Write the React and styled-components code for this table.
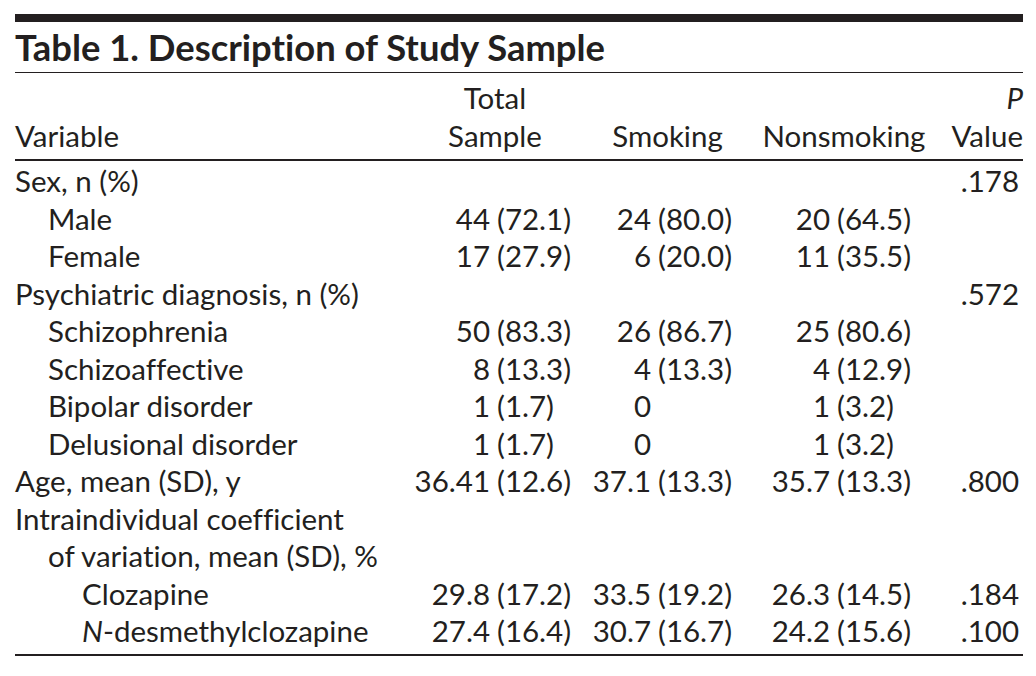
import React from "react";
import styled, { createGlobalStyle } from "styled-components";

const GlobalStyle = createGlobalStyle`
  html, body {
    margin: 0;
    padding: 0;
    background: #ffffff;
  }
  body {
    font-family: Lato, "Open Sans", "Liberation Sans", sans-serif;
    font-variant-ligatures: none;
    font-feature-settings: "liga" 0, "clig" 0;
    color: #231f20;
  }
`;

const Page = styled.div`
  width: 1008px;
  padding: 14px 0 0 15px;
`;

const TopRule = styled.div`
  height: 8px;
  background: #231f20;
`;

const Title = styled.h1`
  margin: 0;
  font-size: 36.4px;
  font-weight: 700;
  line-height: 50px;
  border-bottom: 1px solid #231f20;
`;

const Table = styled.table`
  width: 100%;
  border-collapse: collapse;
  table-layout: fixed;
  font-size: 29.5px;
  border-bottom: 2px solid #231f20;
`;

const Head = styled.thead`
  border-bottom: 2px solid #231f20;
`;

const HeadCell = styled.th`
  font-weight: 400;
  padding: 6px 0 4px;
  line-height: 38px;
  vertical-align: bottom;
  text-align: ${(p) => p.$align || "center"};
`;

const Row = styled.tr`
  line-height: 37.5px;
`;

const Label = styled.td`
  padding: 0 0 0 ${(p) => p.$indent || 0}px;
  white-space: nowrap;
`;

const Cell = styled.td`
  padding: 0;
  white-space: nowrap;
`;

const Split = styled.div`
  display: grid;
  grid-template-columns: ${(p) => p.$count}px auto;
  column-gap: 7px;
`;

const Count = styled.span`
  text-align: right;
`;

const Pct = styled.span`
  text-align: left;
`;

const PValue = styled.td`
  padding: 0 4px 0 0;
  text-align: right;
`;

const Ital = styled.i`
  font-style: italic;
`;

const Body = styled.tbody`
  tr:first-child td {
    padding-top: 1px;
  }
  tr:last-child td {
    padding-bottom: 4px;
  }
`;

// width of the count box before the "(" in each group column
const SPLITS = [80, 71, 75];

const rows = [
  { label: "Sex, n (%)", p: ".178" },
  { label: "Male", indent: 33, v: [["44", "(72.1)"], ["24", "(80.0)"], ["20", "(64.5)"]] },
  { label: "Female", indent: 33, v: [["17", "(27.9)"], ["6", "(20.0)"], ["11", "(35.5)"]] },
  { label: "Psychiatric diagnosis, n (%)", p: ".572" },
  { label: "Schizophrenia", indent: 33, v: [["50", "(83.3)"], ["26", "(86.7)"], ["25", "(80.6)"]] },
  { label: "Schizoaffective", indent: 33, v: [["8", "(13.3)"], ["4", "(13.3)"], ["4", "(12.9)"]] },
  { label: "Bipolar disorder", indent: 33, v: [["1", "(1.7)"], ["0", ""], ["1", "(3.2)"]] },
  { label: "Delusional disorder", indent: 33, v: [["1", "(1.7)"], ["0", ""], ["1", "(3.2)"]] },
  { label: "Age, mean (SD), y", v: [["36.41", "(12.6)"], ["37.1", "(13.3)"], ["35.7", "(13.3)"]], p: ".800" },
  { label: "Intraindividual coefficient" },
  { label: "of variation, mean (SD), %", indent: 33 },
  { label: "Clozapine", indent: 67, v: [["29.8", "(17.2)"], ["33.5", "(19.2)"], ["26.3", "(14.5)"]], p: ".184" },
  {
    label: (
      <>
        <Ital>N</Ital>-desmethylclozapine
      </>
    ),
    indent: 67,
    v: [["27.4", "(16.4)"], ["30.7", "(16.7)"], ["24.2", "(15.6)"]],
    p: ".100",
  },
];

const DataRow = ({ row }) => (
  <Row>
    <Label $indent={row.indent}>{row.label}</Label>
    {[0, 1, 2].map((i) => (
      <Cell key={i}>
        {row.v && (
          <Split $count={SPLITS[i]}>
            <Count>{row.v[i][0]}</Count>
            <Pct>{row.v[i][1]}</Pct>
          </Split>
        )}
      </Cell>
    ))}
    <PValue>{row.p}</PValue>
  </Row>
);

export default function App() {
  return (
    <>
      <GlobalStyle />
      <Page>
        <TopRule />
        <Title>Table 1. Description of Study Sample</Title>
        <Table>
          <colgroup>
            <col style={{ width: 395 }} />
            <col style={{ width: 170 }} />
            <col style={{ width: 175 }} />
            <col style={{ width: 178 }} />
            <col style={{ width: 90 }} />
          </colgroup>
          <Head>
            <tr>
              <HeadCell $align="left">Variable</HeadCell>
              <HeadCell>
                Total
                <br />
                Sample
              </HeadCell>
              <HeadCell>Smoking</HeadCell>
              <HeadCell>Nonsmoking</HeadCell>
              <HeadCell $align="right">
                <Ital>P</Ital>
                <br />
                Value
              </HeadCell>
            </tr>
          </Head>
          <Body>
            {rows.map((r, i) => (
              <DataRow key={i} row={r} />
            ))}
          </Body>
        </Table>
      </Page>
    </>
  );
}
